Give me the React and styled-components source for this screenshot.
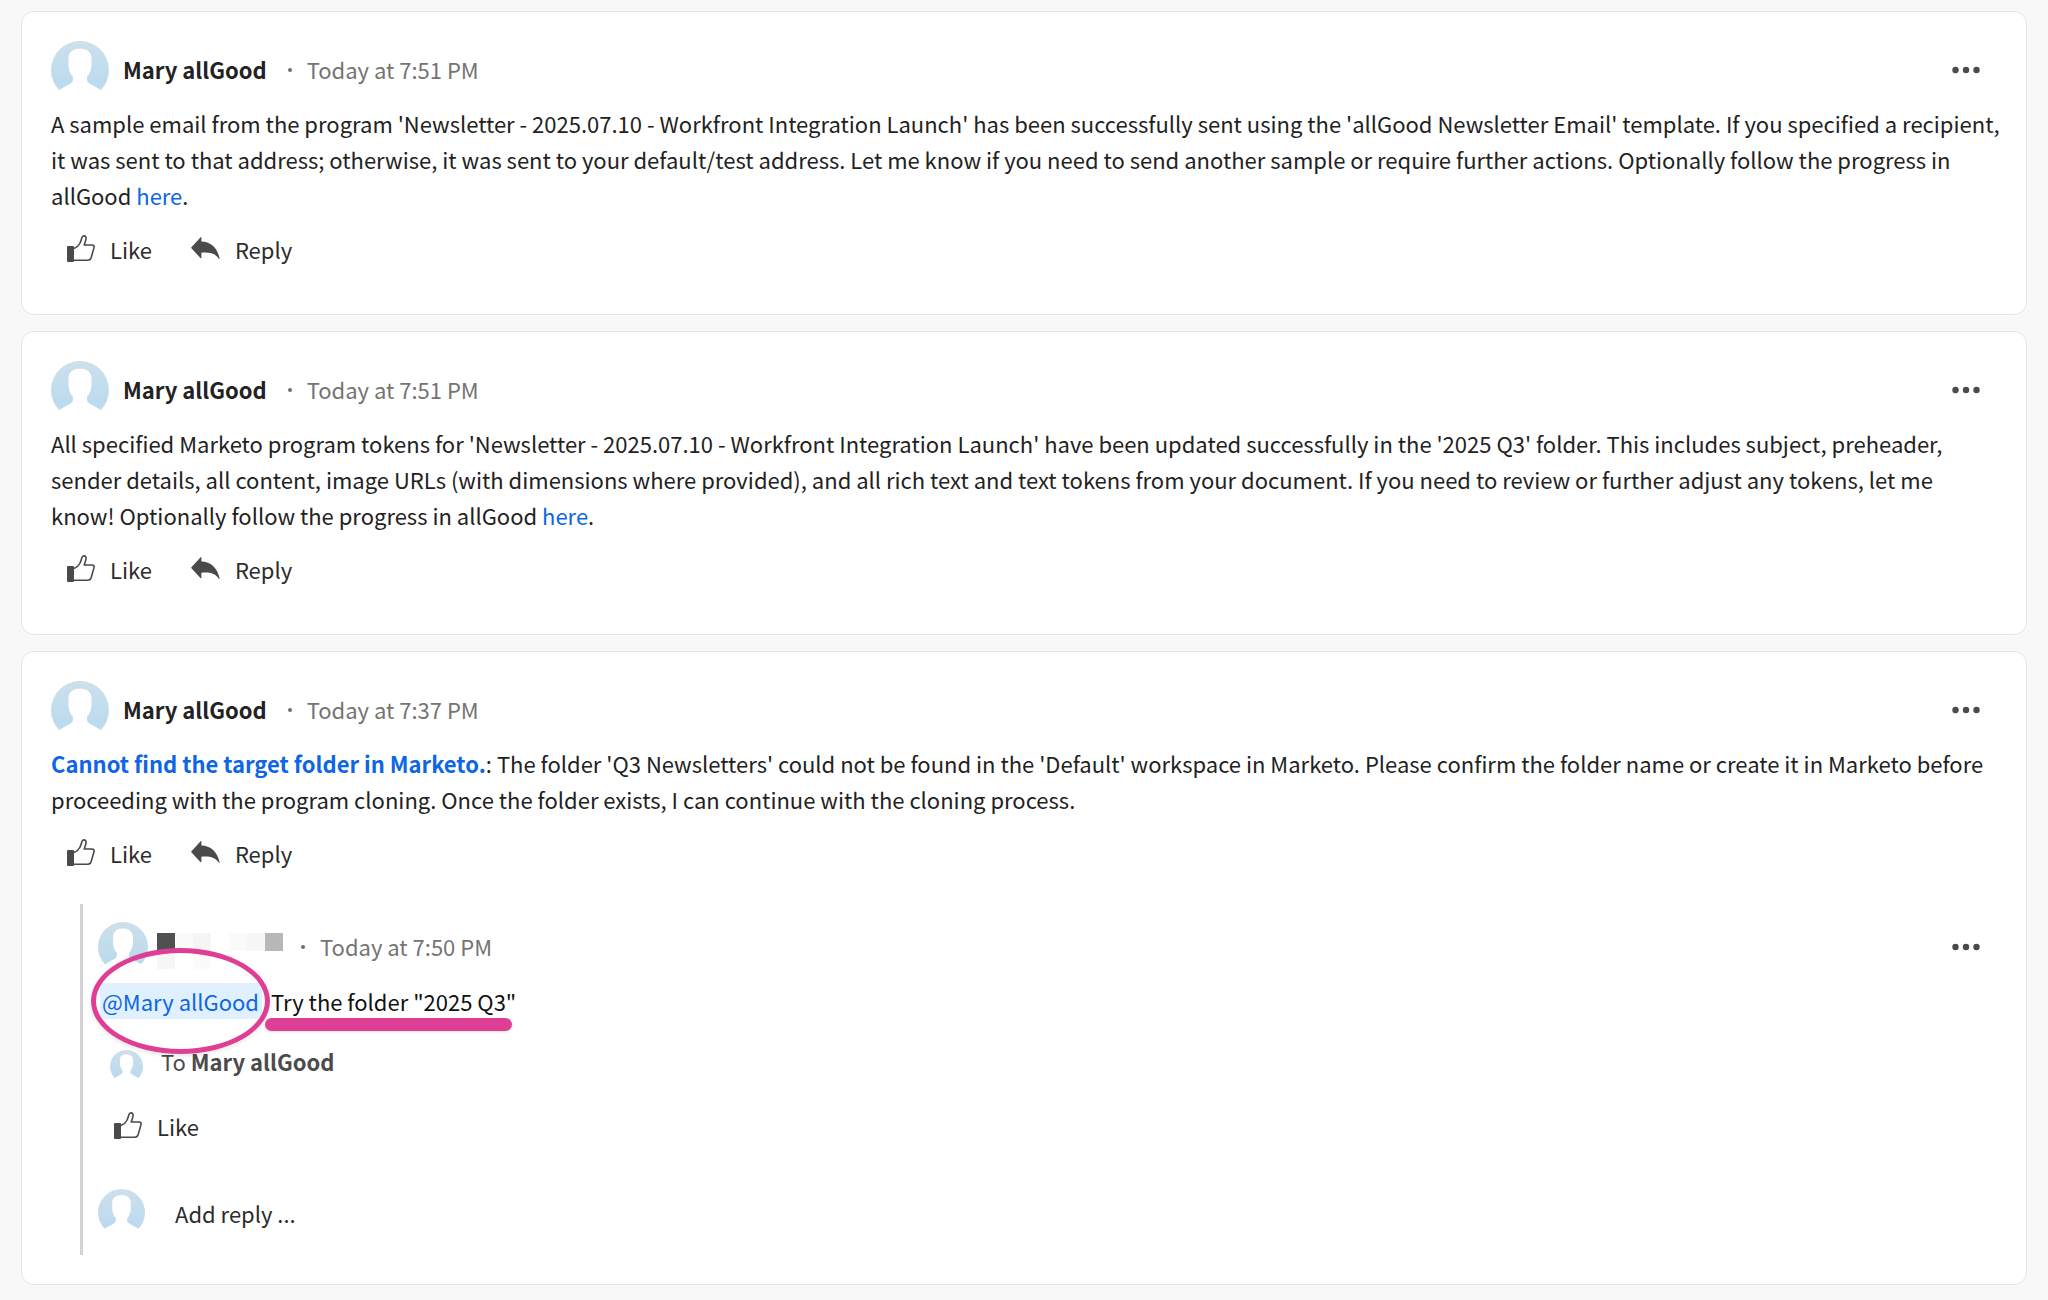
import { useId } from 'react';
import styled, { createGlobalStyle } from 'styled-components';

const GlobalStyle = createGlobalStyle`
  * {
    box-sizing: border-box;
  }

  body {
    margin: 0;
    background: #f8f8f8;
    color: #222222;
    font-family: 'Noto Sans CJK SC', 'Open Sans', sans-serif;
    font-size: 22px;
    line-height: 36px;
  }
`;

const Stream = styled.main`
  display: flex;
  flex-direction: column;
  gap: 16px;
  padding: 11px 21px;
`;

const Card = styled.article`
  padding: 29px 20px 29px 29px;
  background: #ffffff;
  border: 1px solid #e6e6e6;
  border-radius: 13px;
`;

const Header = styled.header`
  display: flex;
  align-items: center;
  height: ${(props) => (props.$small ? '50px' : '58px')};
  margin-bottom: ${(props) => (props.$small ? '11px' : '6px')};
  padding-right: 26px;
`;

const AvatarSvg = styled.svg`
  flex: none;
  display: block;
`;

const Author = styled.strong`
  margin-left: 14px;
  padding-bottom: 2px;
  font-weight: 700;
`;

const Dot = styled.span`
  width: 4px;
  height: 4px;
  margin: 0 15px 0 ${(props) => (props.$small ? '18px' : '21px')};
  border-radius: 50%;
  background: #6e6e6e;
`;

const Time = styled.time`
  padding-bottom: 2px;
  color: #747474;
`;

const MoreButton = styled.button`
  display: flex;
  margin-left: auto;
  padding: 12px 0;
  border: none;
  background: none;
  cursor: pointer;
`;

const Message = styled.p`
  margin: 0;
`;

const Link = styled.a`
  color: #0d66e4;
  font-weight: ${(props) => (props.$bold ? 700 : 400)};
  text-decoration: none;
`;

const Actions = styled.div`
  display: flex;
  gap: 39px;
  padding: 15px 0 15px 16px;
`;

const ActionButton = styled.button`
  display: flex;
  align-items: center;
  gap: 15px;
  height: 42px;
  padding: 0;
  border: none;
  background: none;
  color: #2c2c2c;
  font: inherit;
  cursor: pointer;
`;

const Thread = styled.section`
  margin: 15px 0 0 29px;
  padding: 18px 0 19px 15px;
  border-left: 3px solid #d3d3d3;
`;

/* Blurred-out user name */
const HiddenName = styled.span`
  display: grid;
  grid-template-columns: repeat(7, 18px);
  grid-auto-rows: 18px;
  margin: 8px 0 0 9px;
`;

const Tile = styled.span`
  background: ${(props) => props.$color};
`;

const Mention = styled.a`
  position: relative;
  display: inline-block;
  margin: 0 9px 0 2px;
  padding: 0 3px 0 2px;
  background: #e0f0fe;
  color: #0d66e4;
  text-decoration: none;
`;

/* Hand-marked ring and underline, both lie over the text */
const Ring = styled.span`
  position: absolute;
  inset: -35px -8px -35px -9px;
  border: 5px solid #de3f94;
  border-radius: 50%;
  box-shadow: 0 2px 4px rgba(0, 0, 0, 0.1);
  pointer-events: none;
`;

const Marked = styled.span`
  position: relative;
  display: inline-block;
  color: #111111;

  &::after {
    content: '';
    position: absolute;
    left: -6px;
    right: 4px;
    top: 35px;
    height: 13px;
    border-radius: 7px;
    background: #de3f94;
    box-shadow: 0 1px 3px rgba(0, 0, 0, 0.15);
  }
`;

const Recipient = styled.div`
  display: flex;
  align-items: flex-end;
  gap: 18px;
  padding: 24px 0 7px 12px;
  color: #4b4b4b;
`;

const RecipientName = styled.span`
  padding-bottom: 4px;
`;

const AddReply = styled.button`
  display: flex;
  align-items: center;
  gap: 30px;
  margin-top: 27px;
  padding: 0;
  border: none;
  background: none;
  color: #2c2c2c;
  font: inherit;
  cursor: pointer;
`;

const Avatar = ({ size = 58 }) => {
  const id = useId();

  return (
    <AvatarSvg width={size} height={size} viewBox="0 0 58 58" aria-hidden="true">
      <defs>
        <linearGradient id={id} x1="0" y1="0" x2="0" y2="1">
          <stop offset="0" stopColor="#cddfeb" />
          <stop offset="0.85" stopColor="#badaee" />
        </linearGradient>
      </defs>
      <circle cx="29" cy="29" r="29" fill={`url(#${id})`} />
      <path
        d="M29 7.5C36 7.5 40.5 11 40.5 17.5V24C40.5 29 38.5 33 36 36V38.5C36 40.5 37 41.5 38.5 42.5L50 49V58H8V49L19.5 42.5C21 41.5 22 40.5 22 38.5V36C19.5 33 17.5 29 17.5 24V17.5C17.5 11 22 7.5 29 7.5Z"
        fill="#ffffff"
      />
    </AvatarSvg>
  );
};

const LikeIcon = () => (
  <svg width="28" height="28" viewBox="0 0 28 28" aria-hidden="true">
    <rect x="0" y="11" width="7" height="16" rx="1" fill="#4a4a4a" />
    <path
      d="M7 13.5C10 12.5 11.5 11 12.8 8.5C14 6.2 14.4 4.8 14.8 3C15.2 1.2 16 .9 17 .9C18.5 .9 19.2 2.2 19 4C18.8 6 17.8 8 17.2 10H25C26.8 10 27.4 11.2 27 12.6L24.2 22.5C23.6 24.4 22.8 25.2 21 25.2H7"
      fill="none"
      stroke="#4a4a4a"
      strokeWidth="1.6"
      strokeLinejoin="round"
    />
  </svg>
);

const ReplyIcon = () => (
  <svg width="29" height="28" viewBox="0 0 29 28" aria-hidden="true">
    <path
      d="M.4 12.2L9.4 2.4C9.9 1.9 10.4 2.1 10.4 2.8V6.6C19.5 6.6 26.5 13 28.6 23.6C28.7 24.2 28.2 24.3 27.9 23.8C24.5 18.6 18.5 17 10.4 17.8V22.6C10.4 23.3 9.9 23.5 9.4 23L.4 13.2C.1 12.9 .1 12.5 .4 12.2Z"
      fill="#4a4a4a"
    />
  </svg>
);

const More = () => (
  <MoreButton type="button" aria-label="More">
    <svg width="28" height="8" viewBox="0 0 28 8" aria-hidden="true" fill="#4a4a4a">
      <circle cx="3.5" cy="4" r="3.2" />
      <circle cx="14" cy="4" r="3.2" />
      <circle cx="24.5" cy="4" r="3.2" />
    </svg>
  </MoreButton>
);

const LikeButton = () => (
  <ActionButton type="button">
    <LikeIcon />
    Like
  </ActionButton>
);

const Comment = ({ time, children, thread }) => (
  <Card>
    <Header>
      <Avatar />
      <Author>Mary allGood</Author>
      <Dot />
      <Time>{time}</Time>
      <More />
    </Header>
    <Message>{children}</Message>
    <Actions>
      <LikeButton />
      <ActionButton type="button">
        <ReplyIcon />
        Reply
      </ActionButton>
    </Actions>
    {thread}
  </Card>
);

const tiles = [
  '#505050', '#fafafa', '#f5f5f5', '#ffffff', '#fafafa', '#f6f6f6', '#b7b7b7',
  '#f6f6f6', '#ffffff', '#fbfbfb', '#ffffff', '#ffffff', '#ffffff', '#ffffff',
];

const ReplyThread = () => (
  <Thread>
    <Header $small>
      <Avatar size={50} />
      <HiddenName>
        {tiles.map((color, i) => (
          <Tile key={i} $color={color} />
        ))}
      </HiddenName>
      <Dot $small />
      <Time>Today at 7:50 PM</Time>
      <More />
    </Header>
    <Message>
      <Mention href="#mary">
        @Mary allGood
        <Ring />
      </Mention>
      <Marked>Try the folder "2025 Q3"</Marked>
    </Message>
    <Recipient>
      <Avatar size={33} />
      <RecipientName>
        To <strong>Mary allGood</strong>
      </RecipientName>
    </Recipient>
    <Actions>
      <LikeButton />
    </Actions>
    <AddReply type="button">
      <Avatar size={47} />
      Add reply ...
    </AddReply>
  </Thread>
);

const App = () => (
  <>
    <GlobalStyle />
    <Stream>
      <Comment time="Today at 7:51 PM">
        A sample email from the program 'Newsletter - 2025.07.10 - Workfront Integration Launch' has
        been successfully sent using the 'allGood Newsletter Email' template. If you specified a
        recipient, it was sent to that address; otherwise, it was sent to your default/test address.
        Let me know if you need to send another sample or require further actions. Optionally follow
        the progress in allGood <Link href="#progress">here</Link>.
      </Comment>
      <Comment time="Today at 7:51 PM">
        All specified Marketo program tokens for 'Newsletter - 2025.07.10 - Workfront Integration
        Launch' have been updated successfully in the '2025 Q3' folder. This includes subject,
        preheader, sender details, all content, image URLs (with dimensions where provided), and all
        rich text and text tokens from your document. If you need to review or further adjust any
        tokens, let me know!&nbsp;Optionally follow the progress in allGood{' '}
        <Link href="#progress">here</Link>.
      </Comment>
      <Comment time="Today at 7:37 PM" thread={<ReplyThread />}>
        <Link href="#folder" $bold>
          Cannot find the target folder in Marketo.
        </Link>
        : The folder 'Q3 Newsletters' could not be found in the 'Default' workspace in Marketo.
        Please confirm the folder name or create it in Marketo before proceeding with the program
        cloning. Once the folder exists, I can continue with the cloning process.
      </Comment>
    </Stream>
  </>
);

export default App;
